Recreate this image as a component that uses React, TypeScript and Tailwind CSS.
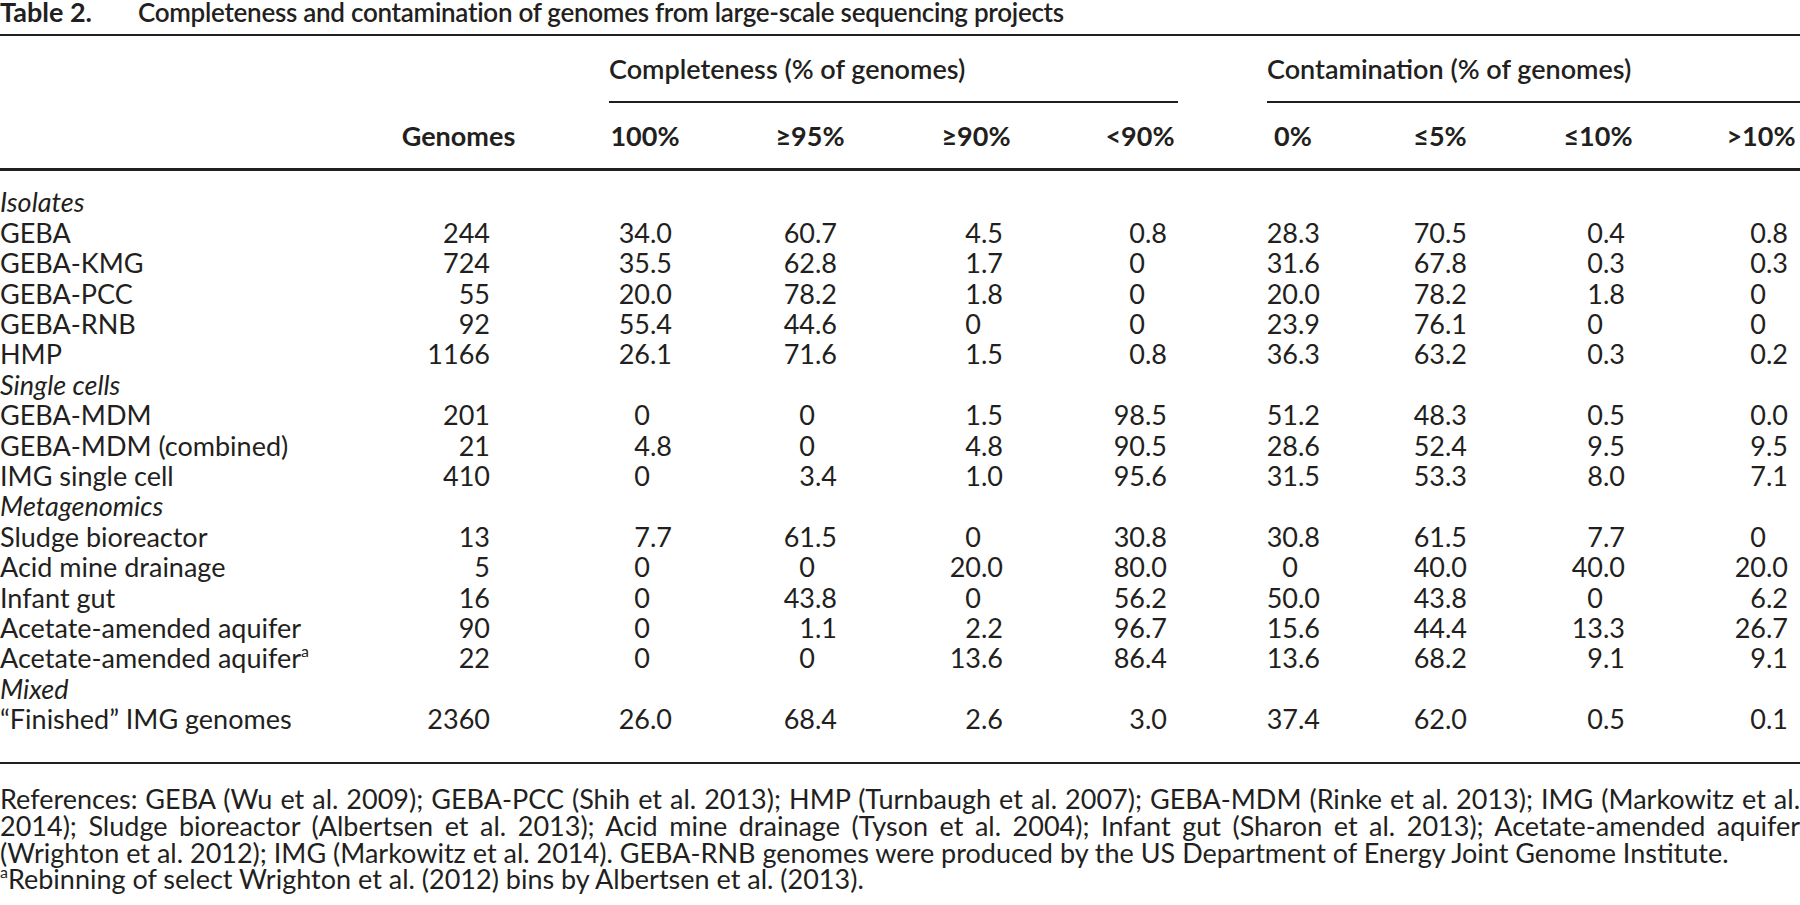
type Row = { label: string; sup?: boolean; genomes: string; values: string[] };
type Section = { title: string; rows: Row[] };

const sections: Section[] = [
  {
    title: 'Isolates',
    rows: [
      { label: 'GEBA', genomes: '244', values: ['34.0', '60.7', '4.5', '0.8', '28.3', '70.5', '0.4', '0.8'] },
      { label: 'GEBA-KMG', genomes: '724', values: ['35.5', '62.8', '1.7', '0', '31.6', '67.8', '0.3', '0.3'] },
      { label: 'GEBA-PCC', genomes: '55', values: ['20.0', '78.2', '1.8', '0', '20.0', '78.2', '1.8', '0'] },
      { label: 'GEBA-RNB', genomes: '92', values: ['55.4', '44.6', '0', '0', '23.9', '76.1', '0', '0'] },
      { label: 'HMP', genomes: '1166', values: ['26.1', '71.6', '1.5', '0.8', '36.3', '63.2', '0.3', '0.2'] },
    ],
  },
  {
    title: 'Single cells',
    rows: [
      { label: 'GEBA-MDM', genomes: '201', values: ['0', '0', '1.5', '98.5', '51.2', '48.3', '0.5', '0.0'] },
      { label: 'GEBA-MDM (combined)', genomes: '21', values: ['4.8', '0', '4.8', '90.5', '28.6', '52.4', '9.5', '9.5'] },
      { label: 'IMG single cell', genomes: '410', values: ['0', '3.4', '1.0', '95.6', '31.5', '53.3', '8.0', '7.1'] },
    ],
  },
  {
    title: 'Metagenomics',
    rows: [
      { label: 'Sludge bioreactor', genomes: '13', values: ['7.7', '61.5', '0', '30.8', '30.8', '61.5', '7.7', '0'] },
      { label: 'Acid mine drainage', genomes: '5', values: ['0', '0', '20.0', '80.0', '0', '40.0', '40.0', '20.0'] },
      { label: 'Infant gut', genomes: '16', values: ['0', '43.8', '0', '56.2', '50.0', '43.8', '0', '6.2'] },
      { label: 'Acetate-amended aquifer', genomes: '90', values: ['0', '1.1', '2.2', '96.7', '15.6', '44.4', '13.3', '26.7'] },
      { label: 'Acetate-amended aquifer', sup: true, genomes: '22', values: ['0', '0', '13.6', '86.4', '13.6', '68.2', '9.1', '9.1'] },
    ],
  },
  {
    title: 'Mixed',
    rows: [
      { label: '“Finished” IMG genomes', genomes: '2360', values: ['26.0', '68.4', '2.6', '3.0', '37.4', '62.0', '0.5', '0.1'] },
    ],
  },
];

const headers = ['100%', '≥95%', '≥90%', '<90%', '0%', '≤5%', '≤10%', '>10%'];

// column right edges: 400, 490, 672, 837, 1003, 1167, 1320, 1467, 1625, 1788, 1800
const grid = 'grid grid-cols-[400px_90px_182px_165px_166px_164px_153px_147px_158px_163px_12px]';

function Num({ value }: { value: string }) {
  const [int, frac] = value.split('.');
  return (
    <div className="flex w-[54px] tabular-nums">
      <span className="w-[32px] text-right">{int}</span>
      <span className="w-[22px] text-left">{frac !== undefined ? `.${frac}` : ''}</span>
    </div>
  );
}

export default function App() {
  return (
    <div className="w-[1800px] h-[905px] overflow-hidden bg-white text-[#231f20] font-['Lato',sans-serif] text-[27px] leading-[30.4px]">
      {/* Title */}
      <div className="flex h-[24px] leading-[24px] whitespace-nowrap">
        <span className="w-[138px] font-bold">Table 2.</span>
        <span className="font-semibold text-[26px] tracking-[-0.28px]">
          Completeness and contamination of genomes from large-scale sequencing projects
        </span>
      </div>
      <div className="mt-[10px] h-[2px] bg-[#231f20]" />

      {/* Group headers */}
      <div className={`${grid} mt-[18.35px] font-semibold whitespace-nowrap`}>
        <div className="col-start-3 col-span-4 ml-[119px] mr-[-11px] pb-[16.25px] border-b-2 border-[#231f20]">
          Completeness (% of genomes)
        </div>
        <div className="col-start-7 col-span-5 ml-[100px] pb-[16.25px] border-b-2 border-[#231f20]">
          Contamination (% of genomes)
        </div>
      </div>

      {/* Column headers */}
      <div className={`${grid} mt-[18.35px] font-bold whitespace-nowrap`}>
        <div />
        <div className="flex justify-end">
          <div className="w-[63px] flex justify-center">Genomes</div>
        </div>
        {headers.map((h) => (
          <div key={h} className="flex justify-end">
            <div className="w-[54px] flex justify-center">{h}</div>
          </div>
        ))}
      </div>
      <div className="mt-[16.25px] h-[3px] bg-[#231f20]" />

      {/* Body */}
      <div className="mt-[16.35px]">
        {sections.map((section) => (
          <div key={section.title}>
            <div className="italic">{section.title}</div>
            {section.rows.map((row) => (
              <div key={row.label + row.genomes} className={`${grid} whitespace-nowrap`}>
                <div>
                  {row.label}
                  {row.sup && <sup className="text-[16px] top-[-0.7em]">a</sup>}
                </div>
                <div className="flex justify-end tabular-nums">{row.genomes}</div>
                {row.values.map((v, i) => (
                  <div key={i} className="flex justify-end">
                    <Num value={v} />
                  </div>
                ))}
              </div>
            ))}
          </div>
        ))}
      </div>
      <div className="mt-[27.45px] h-[2px] bg-[#231f20]" />

      {/* Footnotes */}
      <div className="mt-[22.2px] leading-[26.67px] whitespace-nowrap">
        <div className="text-justify [text-align-last:justify]">
          References: GEBA (Wu et al. 2009); GEBA-PCC (Shih et al. 2013); HMP (Turnbaugh et al. 2007); GEBA-MDM (Rinke et al. 2013); IMG (Markowitz et al.
        </div>
        <div className="text-justify [text-align-last:justify]">
          2014); Sludge bioreactor (Albertsen et al. 2013); Acid mine drainage (Tyson et al. 2004); Infant gut (Sharon et al. 2013); Acetate-amended aquifer
        </div>
        <div>
          (Wrighton et al. 2012); IMG (Markowitz et al. 2014). GEBA-RNB genomes were produced by the US Department of Energy Joint Genome Institute.
        </div>
        <div>
          <sup className="text-[16px] top-[-0.7em]">a</sup>Rebinning of select Wrighton et al. (2012) bins by Albertsen et al. (2013).
        </div>
      </div>
    </div>
  );
}
